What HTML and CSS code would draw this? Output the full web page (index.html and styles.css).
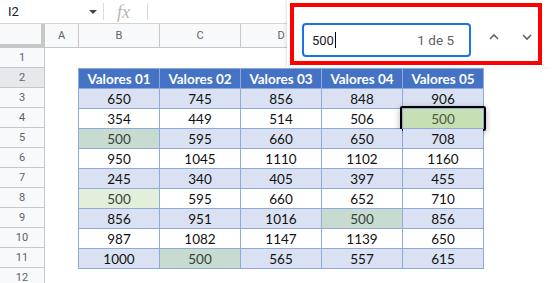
FILE: index.html
```html
<!DOCTYPE html>
<html lang="es">
<head>
<meta charset="utf-8">
<title>Buscar</title>
<link rel="stylesheet" href="styles.css">
</head>
<body>
<div class="app">
  <div class="formula-bar">
    <div class="namebox"><span class="ref">I2</span><span class="dd"></span></div>
    <div class="sep"></div>
    <div class="fx">fx</div>
    <div class="sep"></div>
  </div>
  <div class="sheet">
    <div class="row-heads">
      <div class="corner"></div>
      <div class="rh">1</div>
      <div class="rh sel">2</div>
      <div class="rh">3</div>
      <div class="rh">4</div>
      <div class="rh">5</div>
      <div class="rh">6</div>
      <div class="rh">7</div>
      <div class="rh">8</div>
      <div class="rh">9</div>
      <div class="rh">10</div>
      <div class="rh">11</div>
      <div class="rh">12</div>
    </div>
    <div class="body">
      <div class="col-heads">
        <div class="ch narrow">A</div>
        <div class="ch">B</div>
        <div class="ch">C</div>
        <div class="ch">D</div>
        <div class="ch"></div>
        <div class="ch"></div>
      </div>
      <div class="cells">
        <div class="tbl">
          <div class="th">Valores 01</div><div class="th">Valores 02</div><div class="th">Valores 03</div><div class="th">Valores 04</div><div class="th">Valores 05</div>

          <div class="td b">650</div><div class="td b">745</div><div class="td b">856</div><div class="td b">848</div><div class="td b">906</div>
          <div class="td">354</div><div class="td">449</div><div class="td">514</div><div class="td">506</div><div class="td cur">500</div>
          <div class="td b hit">500</div><div class="td b">595</div><div class="td b">660</div><div class="td b">650</div><div class="td b">708</div>
          <div class="td">950</div><div class="td">1045</div><div class="td">1110</div><div class="td">1102</div><div class="td">1160</div>
          <div class="td b">245</div><div class="td b">340</div><div class="td b">405</div><div class="td b">397</div><div class="td b">455</div>
          <div class="td hitw">500</div><div class="td">595</div><div class="td">660</div><div class="td">652</div><div class="td">710</div>
          <div class="td b">856</div><div class="td b">951</div><div class="td b">1016</div><div class="td b hit">500</div><div class="td b">856</div>
          <div class="td">987</div><div class="td">1082</div><div class="td">1147</div><div class="td">1139</div><div class="td">650</div>
          <div class="td b">1000</div><div class="td b hit">500</div><div class="td b">565</div><div class="td b">557</div><div class="td b">615</div>
        </div>
      </div>
    </div>
  </div>

  <div class="find">
    <div class="find-input">
      <span class="query">500</span><span class="cursor"></span>
      <span class="count">1 de 5</span>
    </div>
    <div class="nav up">
      <svg class="chev" width="12" height="8" viewBox="0 0 12 8"><path d="M2 6 L6 2 L10 6" fill="none" stroke="#5f6368" stroke-width="1.6"/></svg>
    </div>
    <div class="nav">
      <svg class="chev" width="12" height="8" viewBox="0 0 12 8"><path d="M2 2 L6 6 L10 2" fill="none" stroke="#5f6368" stroke-width="1.6"/></svg>
    </div>
    <div class="annot"></div>
  </div>
</div>
</body>
</html>
```

FILE: styles.css
```css
* { box-sizing: border-box; }
html, body { margin: 0; padding: 0; background: #fff; }
body { font-family: Roboto, "Liberation Sans", Arial, sans-serif; width: 552px; height: 283px; overflow: hidden; }

.app { position: relative; width: 552px; height: 283px; overflow: hidden; }

.formula-bar {
  height: 24px;
  display: flex;
  align-items: center;
  border-bottom: 1px solid #d4d4d4;
}
.namebox {
  width: 103px;
  display: flex;
  align-items: center;
  justify-content: space-between;
  padding: 0 6px 0 8px;
}
.ref { font-size: 13px; color: #202124; }
.dd {
  width: 0; height: 0;
  border-left: 4px solid transparent;
  border-right: 4px solid transparent;
  border-top: 4px solid #444746;
}
.sep { width: 1px; height: 17px; background: #dadce0; }
.fx {
  width: 43px;
  padding-left: 13px;
  font-family: "Liberation Serif", "DejaVu Serif", serif;
  font-style: italic;
  font-size: 18px;
  color: #b6b6b6;
  line-height: 1;
}

.sheet { display: flex; }

.row-heads { width: 45px; display: flex; flex-direction: column; }
.corner {
  height: 24px;
  background: #f8f9fa;
  border-right: 4px solid #c7c7c7;
  border-bottom: 4px solid #c7c7c7;
}
.rh {
  height: 20px;
  background: #f8f9fa;
  border-right: 1px solid #c7c7c7;
  border-bottom: 1px solid #c7c7c7;
  font-size: 11px;
  color: #5f6368;
  display: flex;
  align-items: center;
  justify-content: center;
}
.rh.sel { background: #e6e8ec; }

.body { flex: 1; }
.col-heads { display: flex; height: 24px; }
.ch {
  width: 81px;
  flex: none;
  background: #f8f9fa;
  border-right: 1px solid #c7c7c7;
  border-bottom: 1px solid #c7c7c7;
  font-size: 11px;
  color: #5f6368;
  display: flex;
  align-items: center;
  justify-content: center;
}
.ch.narrow { width: 34px; }

.cells { padding: 20px 0 0 33px; }

.tbl {
  display: grid;
  grid-template-columns: repeat(5, 80px);
  grid-auto-rows: 19px;
  gap: 1px;
  padding: 1px;
  width: max-content;
  background: #8eaadb;
  font-family: Lato, "Open Sans", sans-serif;
  font-size: 13.5px;
  color: #111;
}
.th {
  background: #4472c4;
  color: #fff;
  font-weight: 700;
  display: flex; align-items: center; justify-content: center;
}
.td {
  background: #fff;
  display: flex; align-items: center; justify-content: center;
  position: relative;
}
.td.b { background: #d9e1f2; }
.td.hit { background: #c7dbd1; color: #364436; }
.td.hitw { background: #e2efda; color: #364436; }
.td.cur { background: #c6e0b4; color: #4a5a40; }
.td.cur::after {
  content: "";
  position: absolute;
  left: -3px; top: -3px; right: -3px; bottom: -3px;
  border: 2.5px solid #000;
  border-radius: 2px;
  box-shadow: 0 2px 6px rgba(0,0,0,0.3);
}

.find {
  position: absolute;
  left: 287px; top: 0;
  width: 265px; height: 67px;
  background: #fff;
  box-shadow: -1px 0 3px rgba(0,0,0,0.12);
  display: flex;
  align-items: center;
  padding: 0 0 0 15px;
}
.find-input {
  width: 169px;
  height: 34px;
  margin-top: 13px;
  border: 2px solid #1a73e8;
  border-radius: 4px;
  display: flex;
  align-items: center;
  padding: 0 15px 0 8px;
  font-size: 13px;
}
.query { color: #202124; }
.cursor { width: 1px; height: 16px; background: #000; margin-left: 1px; }
.count { color: #5f6368; font-size: 13.5px; margin-left: auto; }
.nav {
  width: 33px;
  margin-top: 7px;
  display: flex; justify-content: center; align-items: center;
}
.nav.up { margin-left: 6px; }
.annot {
  position: absolute;
  left: 3px; top: 3px;
  width: 252px; height: 62px;
  border: 4px solid #ff0000;
}
```
